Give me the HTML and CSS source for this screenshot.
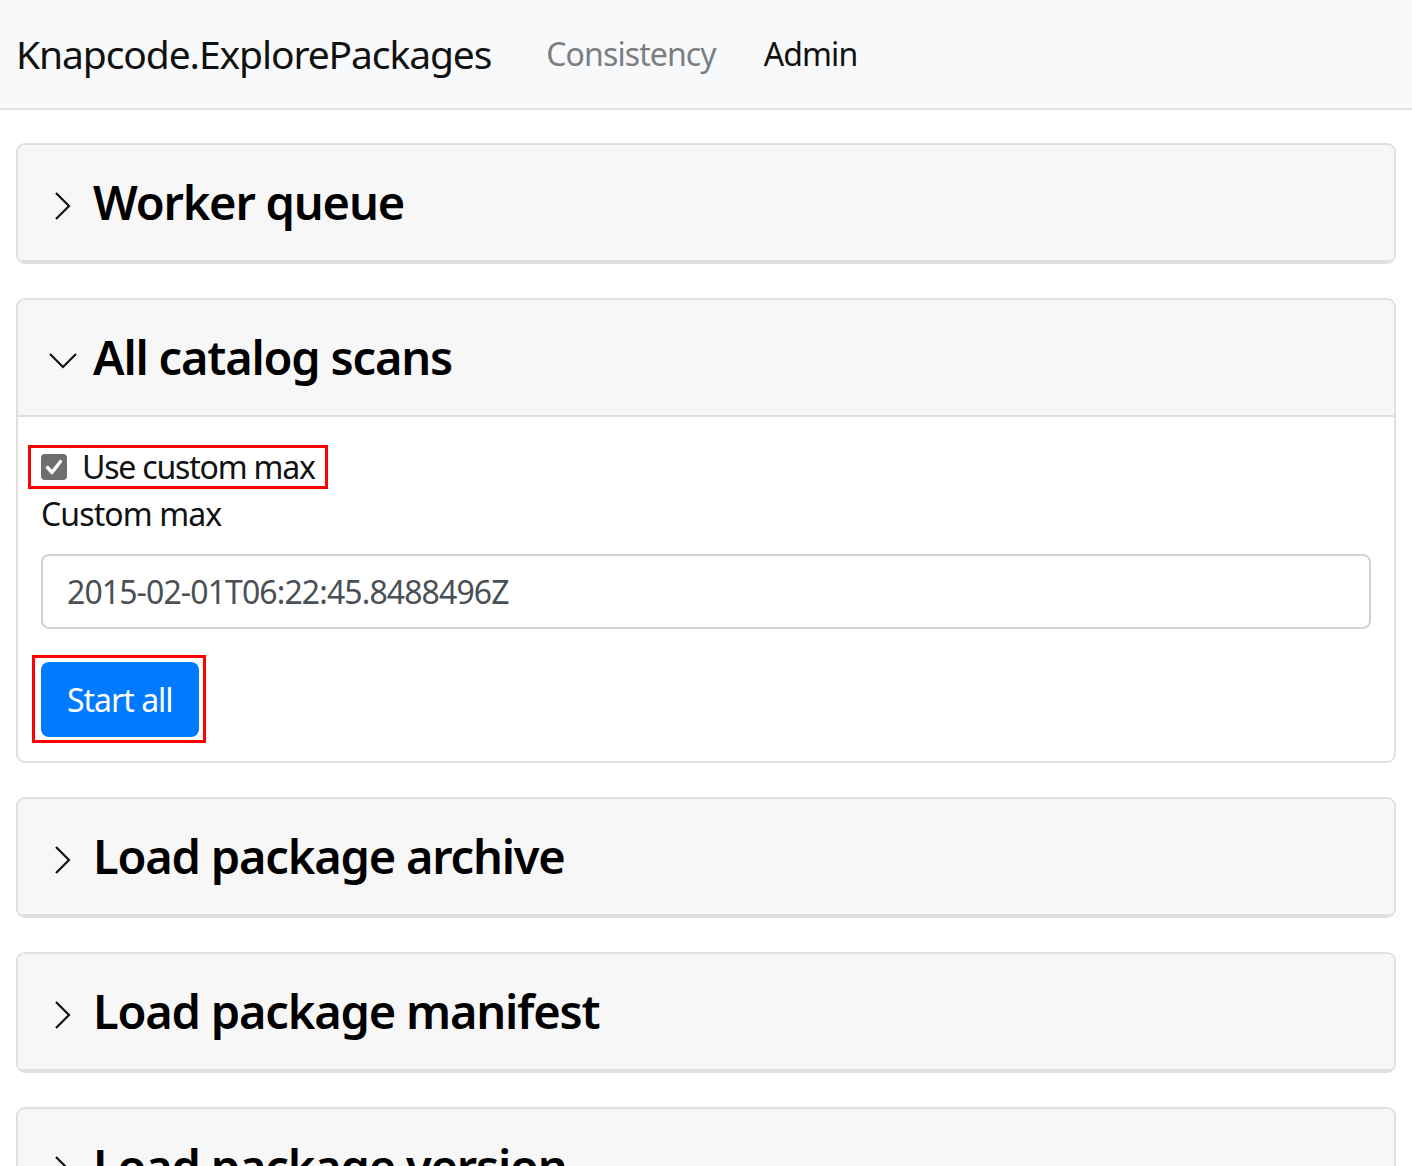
FILE: index.html
```html
<!DOCTYPE html>
<html lang="en">
<head>
<meta charset="utf-8">
<title>Knapcode.ExplorePackages</title>
<link rel="stylesheet" href="styles.css">
</head>
<body>
<nav class="navbar">
  <a class="brand" href="#">Knapcode.ExplorePackages</a>
  <a class="nav-link muted" href="#">Consistency</a>
  <a class="nav-link active" href="#">Admin</a>
</nav>
<main class="container">
  <section class="card">
    <div class="card-header">
      <svg class="chev" viewBox="0 0 28 28"><polyline points="7,1 20,14 7,27"/></svg>
      <h4>Worker queue</h4>
    </div>
  </section>
  <section class="card">
    <div class="card-header">
      <svg class="chev" viewBox="0 0 28 28"><polyline points="1,7 14,20 27,7"/></svg>
      <h4>All catalog scans</h4>
    </div>
    <div class="card-body">
      <label class="form-check">
        <span class="check"><svg viewBox="0 0 26 26"><polyline points="6.5,13.5 11,18.5 19.5,7.5"/></svg></span>
        <span>Use custom max</span>
      </label>
      <label class="field-label">Custom max</label>
      <div class="form-control">2015-02-01T06:22:45.8488496Z</div>
      <span class="highlight"><button class="btn">Start all</button></span>
    </div>
  </section>
  <section class="card">
    <div class="card-header">
      <svg class="chev" viewBox="0 0 28 28"><polyline points="7,1 20,14 7,27"/></svg>
      <h4>Load package archive</h4>
    </div>
  </section>
  <section class="card">
    <div class="card-header">
      <svg class="chev" viewBox="0 0 28 28"><polyline points="7,1 20,14 7,27"/></svg>
      <h4>Load package manifest</h4>
    </div>
  </section>
  <section class="card">
    <div class="card-header">
      <svg class="chev" viewBox="0 0 28 28"><polyline points="7,1 20,14 7,27"/></svg>
      <h4>Load package version</h4>
    </div>
  </section>
</main>
</body>
</html>
```
FILE: styles.css
```css
* { box-sizing: border-box; }
html, body { margin: 0; padding: 0; }
body {
  font-family: "Noto Sans", "Open Sans", sans-serif;
  color: #212529;
  background: #fff;
  font-size: 32px;
  line-height: 1.5;
  letter-spacing: -0.9px;
}
a { text-decoration: none; }

.navbar {
  display: flex;
  align-items: center;
  height: 110px;
  padding: 0 16px;
  background: #f8f9fa;
  border-bottom: 2px solid #dfe1e3;
}
.brand {
  font-size: 39px;
  line-height: 60px;
  letter-spacing: -1.1px;
  color: #111;
  margin-right: 31px;
}
.nav-link {
  font-size: 32px;
  line-height: 48px;
  letter-spacing: -0.9px;
  padding: 0 24px;
}
.nav-link.muted { color: #7b7f83; }
.nav-link.active { color: #111; }

.container {
  padding: 33px 16px 0;
  display: flex;
  flex-direction: column;
  gap: 34px;
}
.card {
  border: 2px solid #dfdfdf;
  border-radius: 9px;
  overflow: hidden;
  background: #fff;
}
.card-header {
  display: flex;
  align-items: center;
  gap: 16px;
  height: 117px;
  padding: 0 31px;
  background: #f7f7f7;
  border-bottom: 2px solid #dfdfdf;
}
.chev {
  width: 28px;
  height: 28px;
  margin-top: 6px;
  flex: none;
}
.chev polyline {
  fill: none;
  stroke: #111;
  stroke-width: 2.2;
}
.card-header h4 {
  margin: 0;
  font-size: 47px;
  line-height: 57px;
  font-weight: 600;
  letter-spacing: -1.2px;
  color: #000;
}

.card-body {
  padding: 31px 23px 18px;
  display: flex;
  flex-direction: column;
  align-items: flex-start;
}
.form-check {
  display: inline-flex;
  align-items: center;
  gap: 15px;
  height: 38px;
  line-height: 38px;
  padding: 0 10px;
  margin-left: -10px;
  outline: 3px solid #f00;
  color: #111;
  letter-spacing: -1.2px;
}
.check {
  width: 26px;
  height: 26px;
  border-radius: 4px;
  background: #6e6e6e;
  display: flex;
}
.check svg { width: 26px; height: 26px; }
.check polyline {
  fill: none;
  stroke: #fff;
  stroke-width: 3.4;
  stroke-linecap: round;
  stroke-linejoin: round;
}
.field-label {
  margin-top: 4px;
  margin-bottom: 16px;
  color: #111;
}
.form-control {
  align-self: stretch;
  height: 75px;
  border: 2px solid #ced4da;
  border-radius: 8px;
  padding: 0 24px;
  display: flex;
  align-items: center;
  color: #495057;
}
.highlight {
  display: inline-flex;
  margin-top: 26px;
  margin-left: -9px;
  padding: 4px 4px 3px 6px;
  border: 3px solid #f00;
}
.btn {
  font-family: inherit;
  font-size: 32px;
  letter-spacing: -1px;
  height: 75px;
  padding: 0 26px;
  border: 0;
  border-radius: 8px;
  background: #007bff;
  color: #fff;
}
```
